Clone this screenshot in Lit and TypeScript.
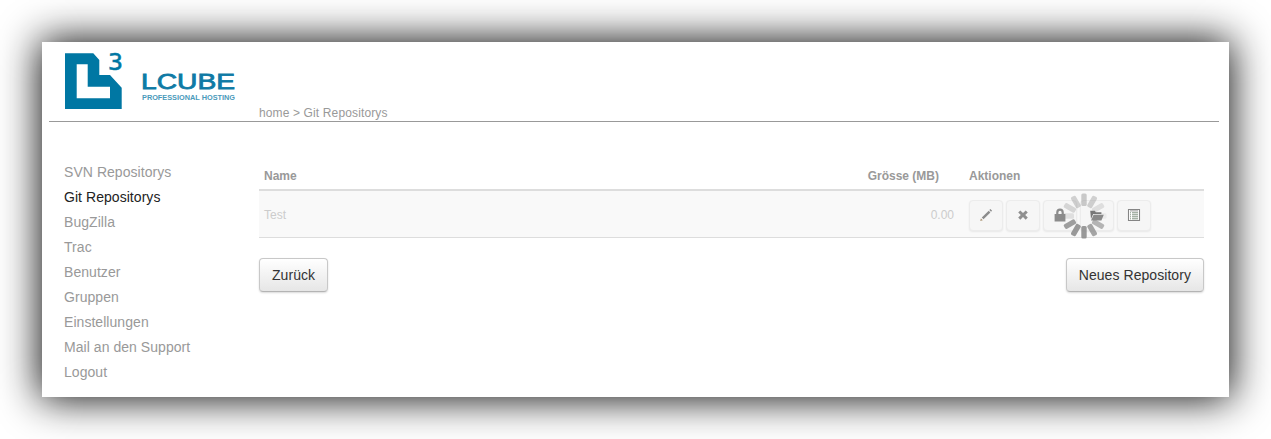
import { LitElement, html, css, svg } from "lit";
import { customElement } from "lit/decorators.js";

const NAV = ["SVN Repositorys", "Git Repositorys", "BugZilla", "Trac", "Benutzer", "Gruppen", "Einstellungen", "Mail an den Support", "Logout"];
const BLADES = [0.42, 0.36, 0.22, 0.1, 0.6, 0.75, 0.85, 0.85, 0.8, 0.2, 0.3, 0.36];

const ICONS = [
  svg`<path d="M11.4 1l1.7 1.7-1.1 1.1-1.7-1.7zM9.7 2.7l1.7 1.7-6.9 6.9-1.7-1.7z" fill="#8c8c8c"/><path d="M1.2 13l.7-2.6 1.9 1.9z" fill="#a8906e"/>`,
  svg`<path d="M2.2 4.5l2.1-2.1L7 5l2.7-2.6 2.1 2.1L9.2 7l2.6 2.6-2.1 2.1L7 9 4.3 11.7 2.2 9.6 4.8 7z" fill="#8f8f8f"/>`,
  svg`<path d="M1.6 6h1.6V4.4a3.8 3.8 0 0 1 7.6 0V6h1.6v7.4H1.6zM5.4 6h3.2V4.4a1.6 1.6 0 0 0-3.2 0z" fill="#8c8c8c" fill-rule="evenodd"/>`,
  svg`<path d="M.2 2.8h4.6l1 1.4h5.6V6H3.2L1 11z" fill="#777"/><path d="M3.6 6.8h10.2l-2.4 5.6H1z" fill="#8a8a8a"/>`,
  svg`<path d="M1.5 1.5h11v11h-11z" fill="#fff" stroke="#858585" stroke-width="1.1"/><path d="M3 2.9h8" stroke="#999" stroke-width="1"/><path d="M5 4.8h6M5 6.8h6M5 8.8h6M5 10.8h6M3 4.8h1M3 6.8h1M3 8.8h1M3 10.8h1" stroke="#7f917f" stroke-width="1"/>`,
];

@customElement("app-root")
export class AppRoot extends LitElement {
  static styles = css`
    :host { display: block; padding: 42px; font-family: "Liberation Sans", Arial, sans-serif; }
    .panel { background: #fff; height: 355px; box-shadow: 0 0 38px 2px rgba(0,0,0,.95); display: flex; flex-direction: column; }
    .head { height: 79px; margin: 0 10px 0 7px; border-bottom: 1px solid #999; display: flex; align-items: flex-start; }
    .logo { width: 210px; height: 79px; flex: none; display: block; }
    .crumb { margin-top: 64px; font-size: 12px; line-height: 15px; color: #999; letter-spacing: .13px; }
    .body { display: flex; flex: 1; }
    .nav { width: 217px; flex: none; box-sizing: border-box; padding: 38px 0 0 22px; }
    .nav a { display: block; font-size: 14px; line-height: 25px; color: #999; letter-spacing: .05px; }
    .nav a.on { color: #222; }
    .main { width: 945px; padding-top: 44px; }
    .hd { display: flex; height: 22px; padding-top: 1px; border-bottom: 2px solid #ddd; font-size: 12px; font-weight: 700; color: #999; line-height: 18px; }
    .hname { flex: 1; padding-left: 5px; }
    .hsize { padding-right: 30px; }
    .hact { width: 235px; }
    .rw { display: flex; align-items: center; height: 44px; padding-top: 2px; background: #f9f9f9; border-bottom: 1px solid #ddd; color: #ccc; font-size: 12px; }
    .rname { flex: 1; padding-left: 5px; }
    .rsize { padding-right: 15px; }
    .ract { width: 235px; display: flex; gap: 3px; position: relative; }
    .ib { width: 34px; height: 31px; box-sizing: border-box; border: 1px solid #ececec; border-radius: 4px; background: #f6f6f6; box-shadow: 0 1px 2px rgba(0,0,0,.07); display: flex; align-items: center; justify-content: center; }
    .ib svg { width: 14px; height: 14px; display: block; }
    .spin { position: absolute; left: 92px; top: -7px; width: 46px; height: 46px; }
    .btns { display: flex; justify-content: space-between; margin-top: 20px; }
    .btn { height: 34px; box-sizing: border-box; padding: 0 12px; border: 1px solid #c8c8c8; border-bottom-color: #b4b4b4; border-radius: 4px; background: linear-gradient(#fff, #e6e6e6); box-shadow: 0 1px 2px rgba(0,0,0,.15); font-size: 14px; line-height: 32px; color: #333; letter-spacing: .06px; }
  `;

  render() {
    return html`<div class="panel">
      <div class="head">
        <svg class="logo" viewBox="0 0 210 79">
          <path fill="#0077a3" fill-rule="evenodd" d="M16 11.3h28.3l6 6.7v15H61l11.7 12.7V67H16zM27.7 22.3v34H61V44.7H38.7V22.3z"/>
          <text x="59" y="28" font-family="DejaVu Sans Mono" font-size="23" fill="#0077a3" stroke="#0077a3" stroke-width=".5" textLength="15" lengthAdjust="spacingAndGlyphs">3</text>
          <text x="92" y="47" font-family="Liberation Sans" font-size="22" fill="#0f7aa5" stroke="#0f7aa5" stroke-width=".8" textLength="94" lengthAdjust="spacingAndGlyphs">LCUBE</text>
          <text x="93" y="58" font-family="Liberation Sans" font-weight="700" font-size="7" fill="#4a9abb" textLength="93" lengthAdjust="spacingAndGlyphs">PROFESSIONAL HOSTING</text>
        </svg>
        <div class="crumb">home &gt; Git Repositorys</div>
      </div>
      <div class="body">
        <div class="nav">${NAV.map((n, i) => html`<a class=${i === 1 ? "on" : ""}>${n}</a>`)}</div>
        <div class="main">
          <div class="hd"><span class="hname">Name</span><span class="hsize">Grösse (MB)</span><span class="hact">Aktionen</span></div>
          <div class="rw">
            <span class="rname">Test</span><span class="rsize">0.00</span>
            <div class="ract">
              ${ICONS.map((p) => html`<span class="ib"><svg viewBox="0 0 14 14">${p}</svg></span>`)}
              <svg class="spin" viewBox="-23 -23 46 46">
                ${BLADES.map((o, i) => svg`<rect x="-2.7" y="-22.5" width="5.4" height="12.5" rx="1.5" fill="#888" opacity=${o} transform="rotate(${i * 30})"/>`)}
              </svg>
            </div>
          </div>
          <div class="btns"><span class="btn">Zurück</span><span class="btn">Neues Repository</span></div>
        </div>
      </div>
    </div>`;
  }
}
